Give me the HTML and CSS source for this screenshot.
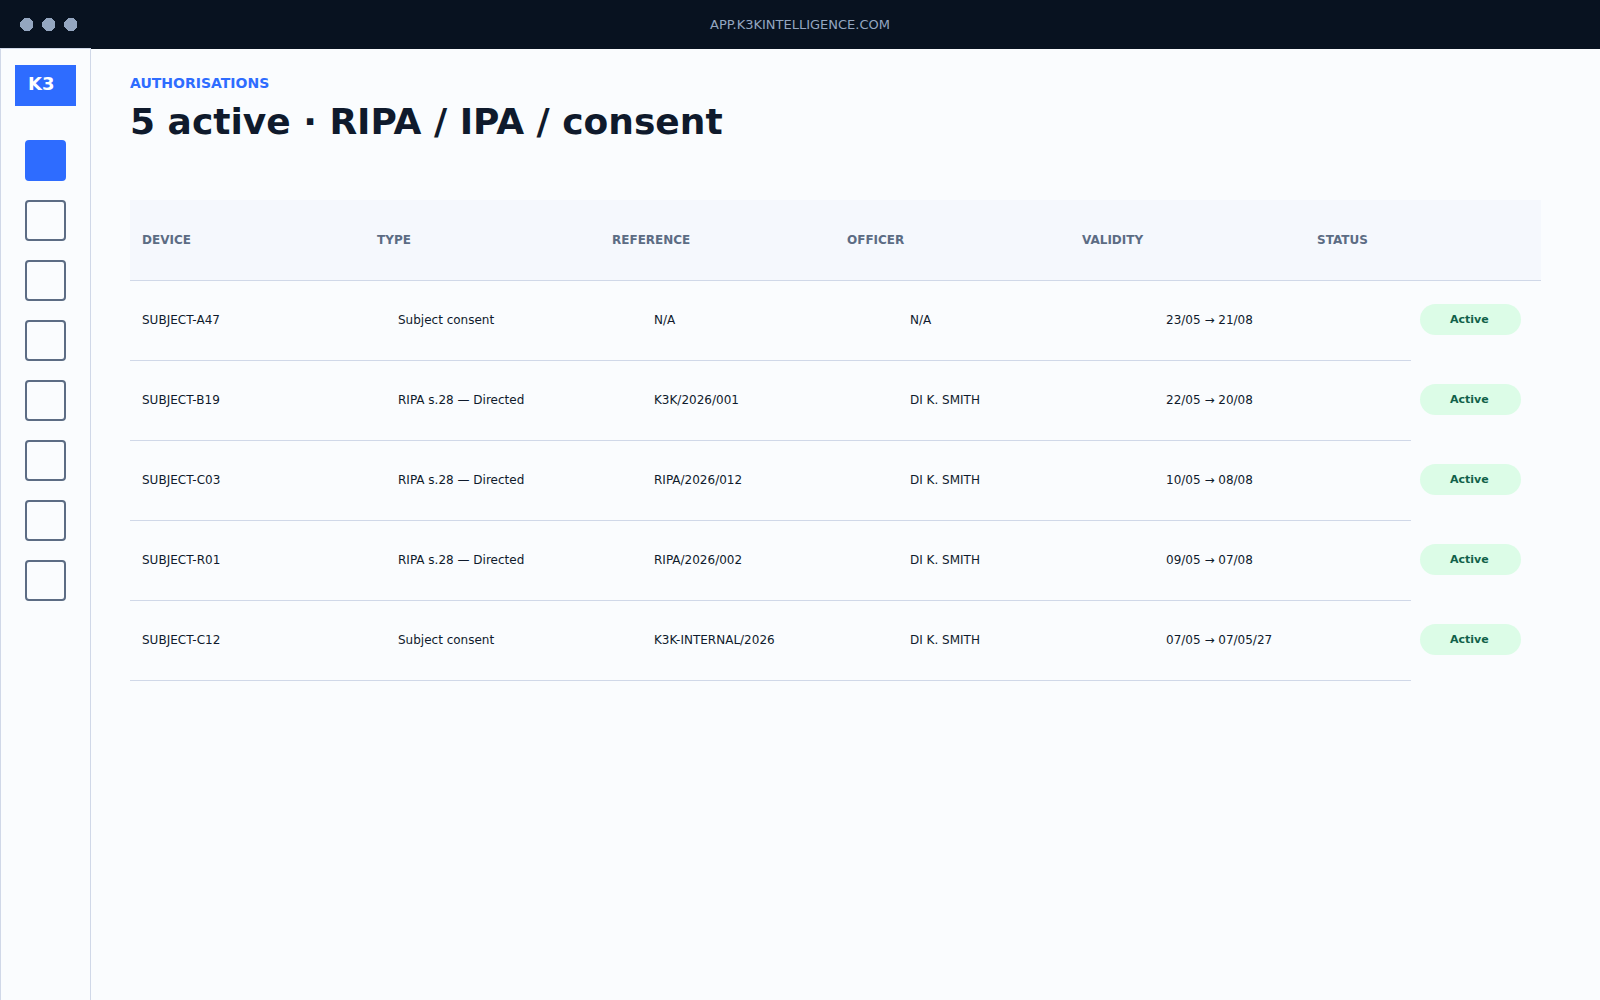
FILE: index.html
```html
<!DOCTYPE html>
<html lang="en">
<head>
  <meta charset="utf-8">
  <meta name="viewport" content="width=device-width, initial-scale=1">
  <title>Authorisations</title>
  <link rel="stylesheet" href="styles.css">
</head>

<body>

<header class="topbar">
  <svg class="dots" width="57" height="13" viewBox="0 0 57 13" shape-rendering="crispEdges">
    <path d="M4 0h5l4 4v5l-4 4h-5l-4-4v-5z"/>
    <path d="M26 0h5l4 4v5l-4 4h-5l-4-4v-5z"/>
    <path d="M48 0h5l4 4v5l-4 4h-5l-4-4v-5z"/>
  </svg>
  <span class="url">APP.K3KINTELLIGENCE.COM</span>
</header>

<div class="app">
  <nav class="sidebar">
    <div class="logo">K3</div>
    <div class="item active"></div>
    <div class="item"></div>
    <div class="item"></div>
    <div class="item"></div>
    <div class="item"></div>
    <div class="item"></div>
    <div class="item"></div>
    <div class="item"></div>
  </nav>

  <main class="content">
    <p class="eyebrow">AUTHORISATIONS</p>
    <h1>5 active · RIPA / IPA / consent</h1>

    <div class="table">
      <div class="head">
        <span>DEVICE</span><span>TYPE</span><span>REFERENCE</span><span>OFFICER</span><span>VALIDITY</span><span>STATUS</span>
      </div>
      <div class="row">
        <div class="cells"><span>SUBJECT-A47</span><span>Subject consent</span><span>N/A</span><span>N/A</span><span>23/05 → 21/08</span></div>
        <div class="pill">Active</div>
      </div>
      <div class="row">
        <div class="cells"><span>SUBJECT-B19</span><span>RIPA s.28 — Directed</span><span>K3K/2026/001</span><span>DI K. SMITH</span><span>22/05 → 20/08</span></div>
        <div class="pill">Active</div>
      </div>
      <div class="row">
        <div class="cells"><span>SUBJECT-C03</span><span>RIPA s.28 — Directed</span><span>RIPA/2026/012</span><span>DI K. SMITH</span><span>10/05 → 08/08</span></div>
        <div class="pill">Active</div>
      </div>
      <div class="row">
        <div class="cells"><span>SUBJECT-R01</span><span>RIPA s.28 — Directed</span><span>RIPA/2026/002</span><span>DI K. SMITH</span><span>09/05 → 07/08</span></div>
        <div class="pill">Active</div>
      </div>
      <div class="row">
        <div class="cells"><span>SUBJECT-C12</span><span>Subject consent</span><span>K3K-INTERNAL/2026</span><span>DI K. SMITH</span><span>07/05 → 07/05/27</span></div>
        <div class="pill">Active</div>
      </div>
    </div>
  </main>
</div>

</body>
</html>
```
FILE: styles.css
```css
* {box-sizing: border-box;}
body {margin: 0;height: 100vh;display: flex;flex-direction: column;overflow: hidden;background: #fafcfe;color: #0f1a2c;font-family: "DejaVu Sans", sans-serif;font-size: 12px;}

.topbar {height: 49px;flex: none;display: grid;grid-template-columns: 1fr auto 1fr;align-items: center;padding: 0 20px;background: #081220;}
.dots {fill: #94a6c0;}
.url {color: #94a6c0;font-size: 13px;line-height: 49px;}

.app {flex: 1;display: flex;margin-top: -1px;}

.sidebar {width: 91px;flex: none;display: flex;flex-direction: column;align-items: center;gap: 19px;border: 1px solid #d0d8e8;border-bottom: 0;padding-top: 16px;background: #fafcfe;}
.logo {width: 61px;height: 41px;margin-bottom: 15px;padding-left: 13px;background: #2e6cff;color: #fff;font-size: 18px;font-weight: bold;line-height: 37px;}
.item {width: 41px;height: 41px;border: 2px solid #5c6c84;border-radius: 4px;}
.item.active {background: #2e6cff;border-color: #2e6cff;}

.content {flex: 1;padding: 26px 59px 0 39px;}
.eyebrow {margin: 0;color: #2e6cff;font-size: 14px;font-weight: bold;line-height: 18px;}
h1 {margin: 9px 0 0;font-size: 36px;line-height: 42px;}

.table {margin-top: 57px;}
.head {display: grid;grid-template-columns: repeat(6, 235px);width: 1411px;height: 81px;border-bottom: 1px solid #d0d8e8;background: #f5f8fd;color: #5c6c84;font-weight: bold;line-height: 80px;}
.head span, .cells span {padding-left: 12px;white-space: nowrap;}
.row {display: flex;align-items: center;height: 80px;}
.cells {display: grid;grid-template-columns: repeat(5, 256px);width: 1281px;height: 80px;border-bottom: 1px solid #d0d8e8;line-height: 78px;}
.pill {width: 101px;height: 31px;margin: 0 0 3px 9px;padding-left: 30px;border-radius: 16px;background: #dcfce7;color: #116149;font-size: 11px;font-weight: bold;line-height: 31px;}
```
